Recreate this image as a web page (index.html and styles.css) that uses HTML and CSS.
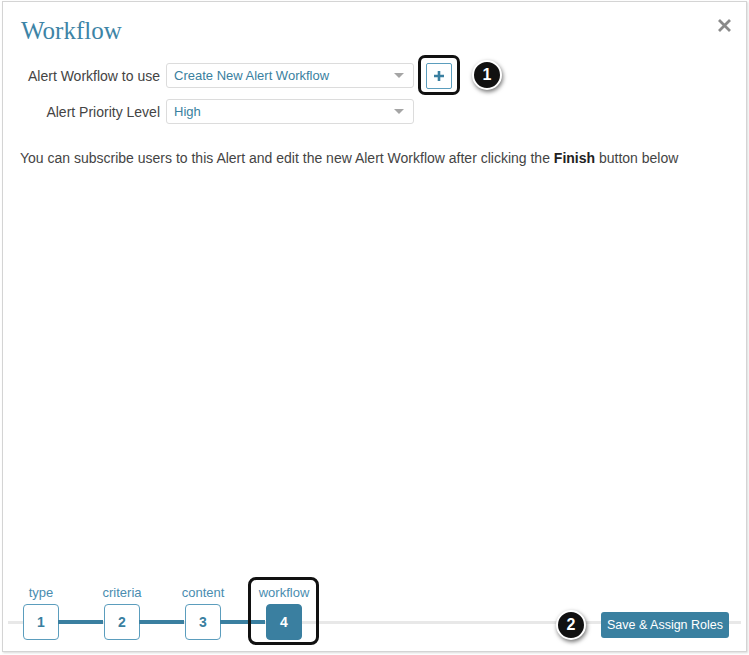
FILE: index.html
```html
<!DOCTYPE html>
<html>
<head>
<meta charset="utf-8">
<link rel="stylesheet" href="styles.css">
</head>
<body>
<div class="modal">
  <div class="header">
    <h1 class="title">Workflow</h1>
    <span class="close" aria-label="close">
      <svg width="15" height="15" viewBox="0 0 15 15"><path d="M2 2 L13 13 M13 2 L2 13" stroke="#8a8a8a" stroke-width="2.8" stroke-linecap="butt"/></svg>
    </span>
  </div>
  <div class="form">
    <label class="label">Alert Workflow to use</label>
    <div class="select"><span>Create New Alert Workflow</span><span class="caret"></span></div>
    <div class="extra">
      <span class="plus-wrap"><button class="plus">
        <svg width="12" height="12" viewBox="0 0 12 12"><path d="M6 1 V11 M1 6 H11" stroke="#3a7fa0" stroke-width="2.6"/></svg>
      </button></span>
      <span class="badge">1</span>
    </div>
    <label class="label">Alert Priority Level</label>
    <div class="select"><span>High</span><span class="caret"></span></div>
    <div></div>
  </div>
  <p class="info">You can subscribe users to this Alert and edit the new Alert Workflow after clicking the <b>Finish</b> button below</p>
  <div class="spacer"></div>
  <div class="footer">
    <div class="track"></div>
    <div class="steps">
      <div class="step"><span class="step-label">type</span><span class="box link">1</span></div>
      <div class="step"><span class="step-label">criteria</span><span class="box link">2</span></div>
      <div class="step"><span class="step-label">content</span><span class="box link">3</span></div>
      <div class="step current"><span class="step-label">workflow</span><span class="box active">4</span></div>
    </div>
    <div class="actions">
      <span class="badge">2</span>
      <button class="save">Save &amp; Assign Roles</button>
    </div>
  </div>
</div>
</body>
</html>
```
FILE: styles.css
```css
* { box-sizing: border-box; }
html, body { margin: 0; padding: 0; background: #fff; }
body {
  width: 749px;
  height: 655px;
  font-family: "Liberation Sans", Arial, sans-serif;
  color: #444;
}
.modal {
  margin: 1px 0 0 2px;
  width: 745px;
  height: 651px;
  border: 1px solid #d4d4d4;
  box-shadow: 1px 1px 2px rgba(0,0,0,0.15);
  display: flex;
  flex-direction: column;
  position: relative;
}
.header {
  display: flex;
  justify-content: space-between;
  align-items: flex-start;
  padding: 14px 14px 0 18px;
}
.title {
  margin: 0;
  font-family: "Liberation Serif", "Times New Roman", serif;
  font-weight: normal;
  font-size: 25px;
  line-height: 30px;
  color: #3d84a6;
}
.close { margin-top: 2px; line-height: 0; }
.form {
  margin-top: 17px;
  display: grid;
  grid-template-columns: 157px 248px auto;
  grid-auto-rows: 25px;
  column-gap: 6px;
  row-gap: 11px;
  align-items: center;
}
.label {
  text-align: right;
  font-size: 14px;
  color: #444;
}
.select {
  height: 25px;
  border: 1px solid #dcdcdc;
  border-radius: 3px;
  display: flex;
  align-items: center;
  justify-content: space-between;
  padding: 0 9px 0 7px;
  font-size: 13px;
  color: #3a7fa0;
}
.caret {
  width: 0; height: 0;
  border-left: 5px solid transparent;
  border-right: 5px solid transparent;
  border-top: 5px solid #a5a5a5;
}
.extra {
  display: flex;
  align-items: center;
  height: 25px;
  padding-left: 6px;
}
.plus-wrap { position: relative; display: inline-flex; margin-top: 1px; }
.plus-wrap::before {
  content: "";
  position: absolute;
  left: -8px; right: -8px; top: -8px; bottom: -6px;
  border: 3px solid #111;
  border-radius: 7px;
}
.plus {
  width: 26px;
  height: 26px;
  border: 1px solid #5b9dbd;
  border-radius: 2px;
  background: #fff;
  padding: 0;
  display: flex;
  align-items: center;
  justify-content: center;
}
.badge {
  flex: none;
  width: 30px;
  height: 30px;
  border-radius: 50%;
  background: #111;
  border: 2px solid #fff;
  box-shadow: 1px 2px 4px rgba(0,0,0,0.55);
  color: #fff;
  font-weight: bold;
  font-size: 16px;
  display: inline-flex;
  align-items: center;
  justify-content: center;
}
.extra .badge { margin-left: 20px; margin-top: -2px; }
.info {
  margin: 24px 0 0 17px;
  font-size: 14px;
  line-height: 20px;
  color: #444;
}
.info b { color: #222; }
.spacer { flex: 1; }
.footer {
  position: relative;
  display: flex;
  align-items: flex-end;
  justify-content: space-between;
  padding: 0 17px 11px 20px;
}
.track {
  position: absolute;
  left: 5px; right: 5px;
  bottom: 27px;
  height: 3px;
  background: #e8e8e8;
}
.steps { display: flex; gap: 45px; position: relative; }
.step {
  width: 36px;
  display: flex;
  flex-direction: column;
  align-items: center;
  position: relative;
}
.step-label {
  white-space: nowrap;
  font-size: 13px;
  line-height: 16px;
  color: #4a8db0;
}
.box {
  margin-top: 3px;
  width: 36px;
  height: 36px;
  border: 1px solid #5b9dbd;
  border-radius: 4px;
  background: #fff;
  display: flex;
  align-items: center;
  justify-content: center;
  font-weight: bold;
  font-size: 14px;
  color: #3a7fa0;
  position: relative;
}
.box.link::after {
  content: "";
  position: absolute;
  left: 100%;
  top: 15px;
  width: 45px;
  height: 4px;
  background: #3a7fa0;
}
.box.active {
  background: #3a7fa0;
  border-color: #3a7fa0;
  color: #fff;
}
.current::before {
  content: "";
  position: absolute;
  left: -18px; right: -17px;
  top: -8px; bottom: -5px;
  border: 3px solid #111;
  border-radius: 8px;
}
.actions {
  position: relative;
  display: flex;
  align-items: center;
  gap: 15px;
  margin-bottom: 0;
}
.save {
  height: 26px;
  width: 128px;
  background: #3a80a0;
  border: none;
  border-radius: 3px;
  color: #fff;
  font-family: "Liberation Sans", Arial, sans-serif;
  font-size: 12.5px;
  padding: 0;
}
```
